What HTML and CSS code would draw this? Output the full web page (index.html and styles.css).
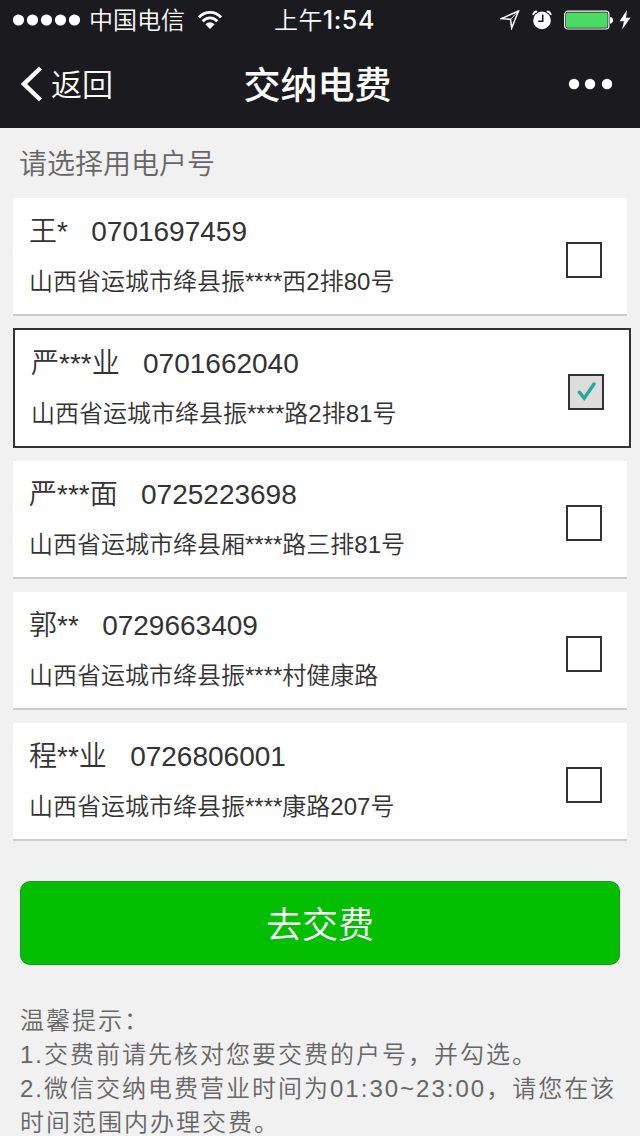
FILE: index.html
```html
<!DOCTYPE html>
<html lang="zh-CN">
<head>
<meta charset="utf-8">
<title>交纳电费</title>
<link rel="stylesheet" href="styles.css">
</head>
<body>
<header class="top">
  <div class="status">
    <div class="carrier">
      <svg class="signal" width="68" height="12" viewBox="0 0 68 12"><g fill="#fff"><circle cx="5.5" cy="6" r="5.6"/><circle cx="19.5" cy="6" r="5.6"/><circle cx="33.5" cy="6" r="5.6"/><circle cx="47.5" cy="6" r="5.6"/><circle cx="61.5" cy="6" r="5.6"/></g></svg>
      <span class="carrier-name">中国电信</span>
      <svg class="wifi" width="24" height="20" viewBox="0 0 24 20"><g fill="none" stroke="#fff" stroke-width="2.8"><path d="M1 7.3C7 .6 17 .6 23 7.3"/><path d="M4.7 11.2C8.8 6.7 15.2 6.7 19.3 11.2"/></g><path d="M12 19L7.3 14.2Q12 10.1 16.7 14.2Z" fill="#fff"/></svg>
    </div>
    <div class="time">上午<span class="clock">1:54</span></div>
    <div class="indicators">
      <svg class="location" width="20" height="20" viewBox="0 0 20 20"><path d="M1.5 8.6L18.5 1L11.7 18L10.5 9.4Z" fill="none" stroke="#fff" stroke-width="1.5"/><path d="M10.5 9.4L18.5 1" stroke="#fff" stroke-width="1"/></svg>
      <svg class="alarm" width="20" height="20" viewBox="0 0 20 20"><circle cx="10" cy="10.4" r="8.8" fill="#fff"/><path d="M1.2 5.2Q1.5 1.7 5.2 1.5M18.8 5.2Q18.5 1.7 14.8 1.5" fill="none" stroke="#fff" stroke-width="1.8"/><path d="M10.7 4.6V11.2H6.2" fill="none" stroke="#1b1a1f" stroke-width="1.6"/></svg>
      <svg class="battery" width="50" height="20" viewBox="0 0 50 20"><rect x=".7" y="1.2" width="44.2" height="17.8" rx="3" fill="none" stroke="#fff" stroke-width="1.2"/><rect x="2" y="2.5" width="41.6" height="15.2" rx="1.7" fill="#4cd964"/><path d="M46 7Q49 7.3 49 10.3T46 13.8Z" fill="#fff"/></svg>
      <svg class="bolt" width="12" height="20" viewBox="0 0 12 20"><path d="M8 0L.5 11.2H5L3 19.5L11.5 7.8H7Z" fill="#fff"/></svg>
    </div>
  </div>
  <nav class="nav">
    <div class="back">
      <svg width="22" height="36" viewBox="0 0 22 36"><path d="M19.5 2L3 18L19.5 34" fill="none" stroke="#fff" stroke-width="4.4"/></svg>
      <span class="back-label">返回</span>
    </div>
    <h1 class="title">交纳电费</h1>
    <svg class="more" width="44" height="12" viewBox="0 0 44 12"><g fill="#fff"><circle cx="6" cy="6" r="5.2"/><circle cx="22" cy="6" r="5.2"/><circle cx="39" cy="6" r="5.2"/></g></svg>
  </nav>
</header>
<main>
  <h2 class="prompt">请选择用电户号</h2>
  <div class="accounts">
    <div class="card"><div class="info"><div class="name">王*&nbsp;&nbsp; 0701697459</div><div class="address">山西省运城市绛县振****西2排80号</div></div><span class="check"></span></div>
    <div class="card selected"><div class="info"><div class="name">严***业&nbsp;&nbsp; 0701662040</div><div class="address">山西省运城市绛县振****路2排81号</div></div><span class="check"><svg width="20" height="20" viewBox="0 0 20 20"><path d="M3.3 10.2L8.2 16.2L18 2" fill="none" stroke="#23ab96" stroke-width="3.4" stroke-linecap="round"/></svg></span></div>
    <div class="card"><div class="info"><div class="name">严***面&nbsp;&nbsp; 0725223698</div><div class="address">山西省运城市绛县厢****路三排81号</div></div><span class="check"></span></div>
    <div class="card"><div class="info"><div class="name">郭**&nbsp;&nbsp; 0729663409</div><div class="address">山西省运城市绛县振****村健康路</div></div><span class="check"></span></div>
    <div class="card"><div class="info"><div class="name">程**业&nbsp;&nbsp; 0726806001</div><div class="address">山西省运城市绛县振****康路207号</div></div><span class="check"></span></div>
  </div>
  <button class="pay">去交费</button>
  <div class="tips">
    <p>温馨提示：</p>
    <p>1.交费前请先核对您要交费的户号，并勾选。</p>
    <p>2.微信交纳电费营业时间为01:30~23:00，请您在该<br>时间范围内办理交费。</p>
  </div>
</main>
</body>
</html>
```
FILE: styles.css
```css
* { box-sizing: border-box; }
body {
  margin: 0;
  height: 1136px;
  overflow: hidden;
  background: #f1f1f1;
  color: #333;
  font-family: "Liberation Sans", "Noto Sans CJK SC", sans-serif;
  font-weight: 350;
}
svg { display: block; flex: none; }
h1, h2, p { margin: 0; font-weight: inherit; }
.top { height: 128px; background: #1b1a1f; color: #fff; }
.status {
  height: 40px;
  display: grid;
  grid-template-columns: 1fr auto 1fr;
  align-items: center;
  padding: 0 9px 0 13px;
}
.carrier { display: flex; align-items: center; font-size: 24px; line-height: 40px; }
.carrier-name { margin: 0 13px 0 8px; padding-top: 2px; line-height: 38px; }
.time { font-size: 24px; line-height: 38px; padding-top: 2px; letter-spacing: .3px; margin-left: 5px; }
.clock { font-family: Inter, sans-serif; font-size: 25px; font-weight: 500; line-height: 1; letter-spacing: .6px; }
.indicators { display: flex; justify-content: flex-end; align-items: center; }
.alarm { margin-left: 12px; }
.battery { margin-left: 12px; }
.bolt { margin-left: 5px; }
.nav {
  height: 88px;
  display: grid;
  grid-template-columns: 1fr auto 1fr;
  align-items: center;
  padding: 0 28px 0 21px;
}
.back { display: flex; align-items: center; gap: 8px; font-size: 31px; line-height: 44px; }
.back-label { padding-top: 4px; }
.title { font-size: 37px; line-height: 50px; font-weight: 500; margin-left: 2px; padding-top: 6px; }
.more { justify-self: end; }
.prompt {
  height: 70px;
  padding-left: 19px;
  font-size: 28px;
  line-height: 73px;
  color: #666;
}
.accounts { display: flex; flex-direction: column; gap: 13px; padding: 0 13px; }
.card {
  height: 118px;
  display: flex;
  justify-content: space-between;
  padding: 14px 25px 0 16px;
  background: #fff;
  border-bottom: 2px solid #ccc;
}
.card.selected {
  width: 618px;
  height: 120px;
  margin-top: -1px;
  border: 2px solid #333;
}
.name { font-size: 28px; line-height: 40px; }
.address { font-size: 24px; line-height: 60px; }
.check {
  width: 36px;
  height: 36px;
  margin-top: 30px;
  display: grid;
  place-items: center;
  border: 2px solid #333;
}
.selected .check { background: #ddd; }
.pay {
  display: block;
  width: 600px;
  height: 84px;
  margin: 40px 20px 39px;
  padding: 5px 0 0;
  border: 1px solid #199b19;
  border-radius: 10px;
  background: #04be02;
  color: #fff;
  font: inherit;
  font-size: 36px;
  line-height: 76px;
}
.tips {
  padding-left: 20px;
  color: #666;
  font-size: 24px;
  line-height: 34px;
  letter-spacing: 2px;
  white-space: nowrap;
}
```
